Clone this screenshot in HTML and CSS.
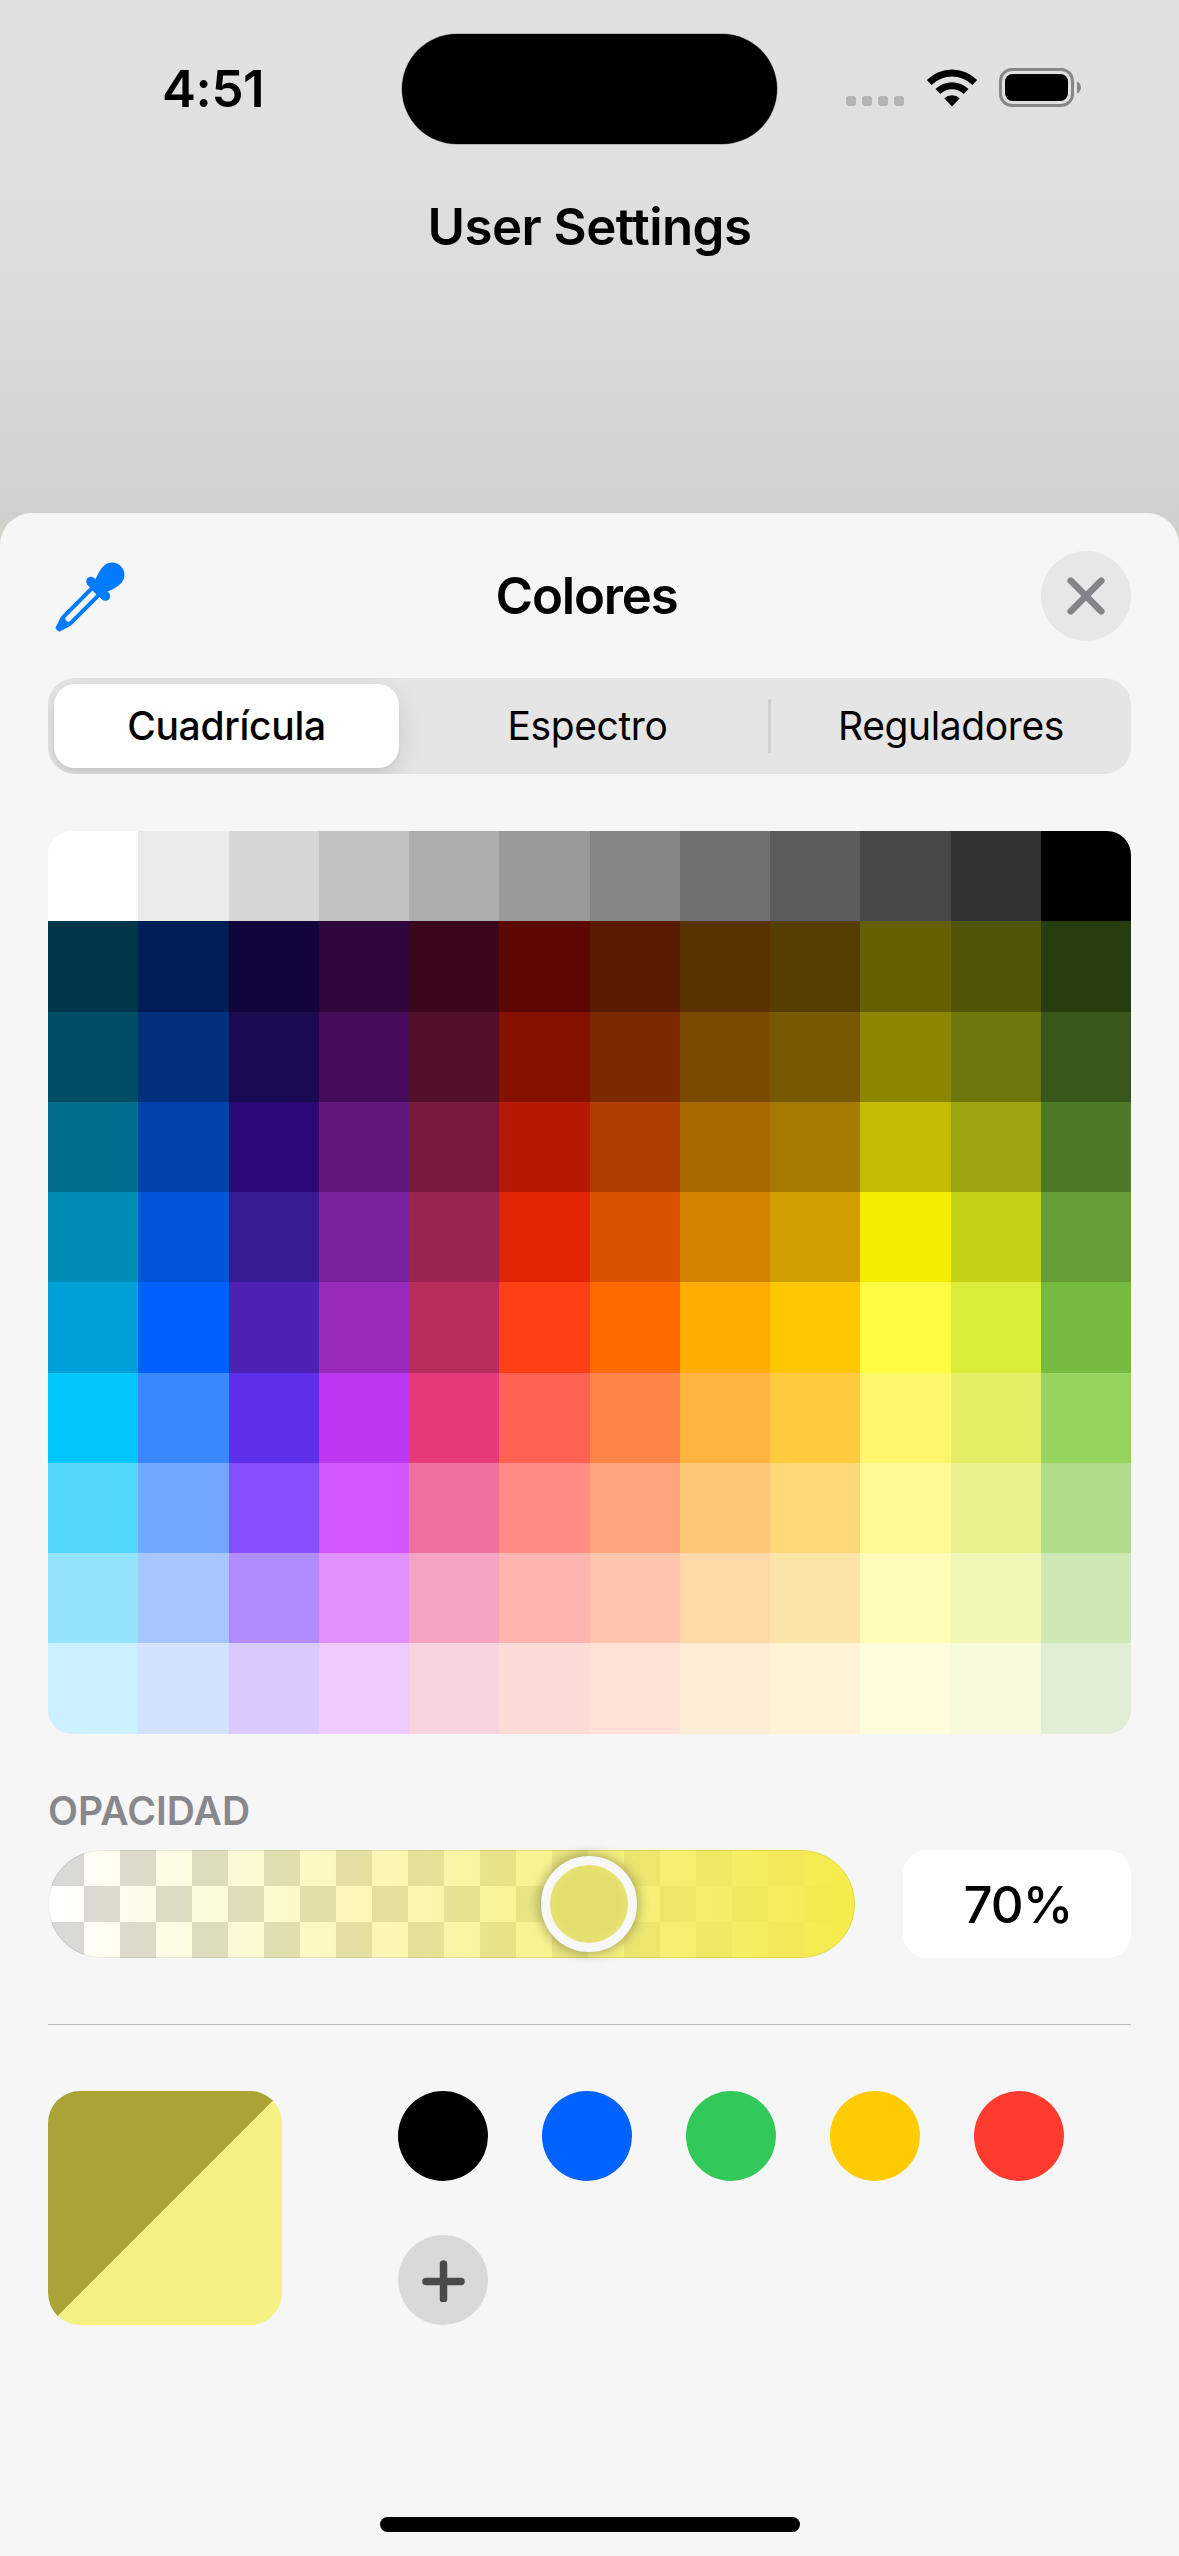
FILE: index.html
```html
<!DOCTYPE html>
<html lang="es">
<head>
<meta charset="utf-8">
<title>Colores</title>
<link rel="stylesheet" href="styles.css">
</head>
<body>
<div class="screen">
  <div class="status">
    <div class="time">4:51</div>
    <div class="island"></div>
    <div class="indicators">
      <div class="dots"><i></i><i></i><i></i><i></i></div>
      <svg class="wifi" width="52" height="38" viewBox="0 0 52 38">
        <path d="M.8 10.900A36 36 0 0 1 51.200 10.900L46.400 16A29 29 0 0 0 5.600 16Z"/>
        <path d="M9.500 20A23.500 23.500 0 0 1 42.500 20L37.700 25A16.500 16.500 0 0 0 14.300 25Z"/>
        <path d="M18.200 29.200A11.500 11.500 0 0 1 33.800 29.200L26 37.500Z"/>
      </svg>
      <svg class="battery" width="83" height="40" viewBox="0 0 83 40">
        <rect x="1.500" y="1.500" width="72" height="36" rx="11.500" fill="none" stroke="#878787" stroke-width="3"/>
        <rect x="6" y="6" width="63" height="27" rx="7.500"/>
        <path d="M78 13.500C83.300 15.500 83.300 23.500 78 25.500Z" fill="#878787"/>
      </svg>
    </div>
  </div>
  <h1 class="page-title">User Settings</h1>
  <main class="sheet">
    <header class="sheet-head">
      <svg class="dropper" width="72" height="72" viewBox="0 0 72 72">
        <g transform="translate(3 70) rotate(-45)" fill="#007aff">
          <path d="M0-1.500Q0-2.800 2-3.300C7-4.500 10-6.800 16-6.800H56V6.800H16C10 6.800 7 4.500 2 3.300Q0 2.800 0 1.500Z"/>
          <path d="M56-8C65-7.500 68-12.300 78-12.300A12.300 12.300 0 0 1 78 12.300C68 12.300 65 7.500 56 8Z"/>
          <rect x="53.500" y="-15" width="9.500" height="30" rx="4.750"/>
          <path d="M16-2.800H53V2.800H16A2.800 2.800 0 0 1 16-2.800Z" fill="#f6f6f6"/>
        </g>
      </svg>
      <h2 class="sheet-title">Colores</h2>
      <button class="close" aria-label="Cerrar">
        <svg width="38" height="38" viewBox="0 0 38 38"><path d="M3.700 3.700L34.300 34.300M34.300 3.700L3.700 34.300"/></svg>
      </button>
    </header>
    <nav class="segments">
      <div class="segment selected">Cuadrícula</div>
      <div class="segment middle">Espectro</div>
      <div class="segment last">Reguladores</div>
    </nav>
    <div class="grid" id="grid"></div>
    <div class="label">OPACIDAD</div>
    <div class="opacity">
      <div class="slider"><div class="knob"></div></div>
      <div class="value">70%</div>
    </div>
    <hr class="rule">
    <div class="saved">
      <div class="current"></div>
      <div class="swatches">
        <div class="dot black"></div>
        <div class="dot blue"></div>
        <div class="dot green"></div>
        <div class="dot yellow"></div>
        <div class="dot red"></div>
        <div class="dot add">
          <svg width="44" height="44" viewBox="0 0 44 44"><path d="M22.500 6V41M5 23.500H40"/></svg>
        </div>
      </div>
    </div>
    <div class="home"></div>
  </main>
</div>
<script src="grid.js"></script>
</body>
</html>
```
FILE: styles.css
```css
* { box-sizing: border-box; }
body {
  margin: 0;
  font-family: Inter, "Liberation Sans", sans-serif;
  color: #000;
}
h1, h2 { margin: 0; font-weight: 600; }
.screen {
  width: 1179px;
  height: 2556px;
  display: flex;
  flex-direction: column;
  overflow: hidden;
  background: linear-gradient(#e1e1e1 0, #e0e0e0 150px, #dcdcdc 290px, #d5d6d4 420px, #cfd1cd 520px, #cfd1cd 100%);
}
.status {
  height: 178px;
  padding: 33px 0 0 162px;
  display: flex;
  align-items: flex-start;
}
.time {
  width: 240px;
  height: 112px;
  line-height: 112px;
  font-size: 51px;
  font-weight: 600;
  letter-spacing: -0.400px;
}
.island {
  width: 375px;
  height: 110px;
  margin-top: 1px;
  border-radius: 55px;
  background: #000;
  box-shadow: 0 0 0 .5px rgba(0, 0, 0, .4);
}
.indicators {
  display: flex;
  align-items: flex-start;
  padding: 35px 0 0 69px;
}
.dots { display: flex; gap: 6px; padding-top: 28px; width: 80px; }
.dots i { width: 10px; height: 10px; border-radius: 3.500px; background: #b3b3b3; }
.wifi { display: block; margin-top: 1px; }
.battery { display: block; margin-left: 21px; }
.page-title {
  height: 335px;
  line-height: 98px;
  text-align: center;
  font-size: 51px;
  letter-spacing: -0.550px;
  font-feature-settings: "calt" 0, "liga" 0, "dlig" 0;
}
.sheet {
  flex: 1;
  padding: 38px 48px 0;
  display: flex;
  flex-direction: column;
  border-radius: 32px 32px 0 0;
  background: #f6f6f6;
}
.sheet-head {
  height: 90px;
  display: grid;
  grid-template-columns: 90px 1fr 90px;
  align-items: center;
}
.dropper { display: block; margin-left: 6px; }
.sheet-title {
  padding-right: 6px;
  text-align: center;
  font-size: 51px;
  letter-spacing: -1.200px;
  line-height: 90px;
}
.close {
  width: 90px;
  height: 90px;
  padding: 0;
  border: 0;
  border-radius: 50%;
  background: #e7e7e7;
  display: flex;
  align-items: center;
  justify-content: center;
}
.close path { stroke: #848488; stroke-width: 6.600; stroke-linecap: round; }
.segments {
  height: 96px;
  margin-top: 37px;
  padding: 6px;
  display: grid;
  grid-template-columns: 345px 1fr 354px;
  border-radius: 27px;
  background: #e5e5e5;
  overflow: hidden;
}
.segment {
  position: relative;
  display: flex;
  align-items: center;
  justify-content: center;
  padding-bottom: 1px;
  font-size: 39px;
  letter-spacing: -0.400px;
}
.segment.selected {
  font-weight: 500;
  letter-spacing: -0.300px;
  border-radius: 21px;
  background: #fff;
  box-shadow: 0 9px 24px rgba(0, 0, 0, .12), 0 3px 3px rgba(0, 0, 0, .04);
}
.segment.middle { padding-left: 5px; }
.segment.last { padding-left: 6px; }
.segment.last::before {
  content: "";
  position: absolute;
  left: -3px;
  top: 15px;
  width: 3px;
  height: 54px;
  border-radius: 2px;
  background: #cfcfd1;
}
.grid {
  height: 903px;
  margin-top: 57px;
  border-radius: 24px;
  overflow: hidden;
}
.grid svg { display: block; }
.label {
  height: 60px;
  margin-top: 47px;
  line-height: 60px;
  font-size: 39px;
  font-weight: 600;
  letter-spacing: .1px;
  color: #88888c;
}
.opacity { display: flex; justify-content: space-between; margin-top: 9px; }
.slider {
  position: relative;
  width: 807px;
  height: 108px;
  border-radius: 54px;
  background:
    linear-gradient(90deg, rgba(244, 235, 75, 0), #f4eb4b),
    conic-gradient(#fff 25%, #d9d9d9 0 50%, #fff 0 75%, #d9d9d9 0) 0 0 / 72px 72px;
  box-shadow: inset 0 0 0 1px rgba(0, 0, 0, .08);
}
.knob {
  position: absolute;
  left: 493px;
  top: 6px;
  width: 96px;
  height: 96px;
  border: 9px solid #f8f8f8;
  border-radius: 50%;
  background: #e3de6e;
  box-shadow: 0 0 14px rgba(0, 0, 0, .4), inset 0 0 9px #ece77a;
}
.value {
  width: 228px;
  height: 108px;
  border-radius: 24px;
  background: #fff;
  display: flex;
  align-items: center;
  justify-content: center;
  padding-left: 2px;
  font-size: 51px;
  font-weight: 500;
  letter-spacing: -1px;
}
.rule { width: 100%; height: 1px; margin: 66px 0 0; border: 0; background: #bcbcbe; }
.saved { display: flex; margin-top: 66px; }
.current {
  width: 234px;
  height: 234px;
  border-radius: 32px;
  background: linear-gradient(135deg, #aaa436 50%, #f6f184 50.200%);
}
.swatches {
  margin-left: 116px;
  display: grid;
  grid-template-columns: repeat(5, 90px);
  grid-auto-rows: 90px;
  gap: 54px;
}
.dot { border-radius: 50%; }
.black { background: #000; }
.blue { background: #0062ff; }
.green { background: #33c85a; }
.yellow { background: #ffcc02; }
.red { background: #ff3b30; }
.add { background: #d9d9d9; display: flex; align-items: center; justify-content: center; }
.add path { stroke: #4a4a4a; stroke-width: 7.500; stroke-linecap: round; }
.home {
  width: 420px;
  height: 15px;
  margin: 192px auto 0;
  border-radius: 8px;
  background: #000;
}
```
FILE: grid.js
```js
const rows = [
  "ffffff ebebeb d6d6d6 c2c2c2 adadad 999999 858585 707070 5c5c5c 474747 333333 000000",
  "00374a 011d57 11053b 2e063d 3c071b 5c0701 5a1c00 583300 563d00 666100 4f5504 263e0f",
  "004d65 012f7b 1a0a52 450d59 551029 831100 7b2900 7a4a00 785800 8d8602 6f760a 38571a",
  "016e8f 0042a9 2c0977 61187c 791a3d b51a00 ad3e00 a96800 a67b01 c4bc00 9ba50e 4e7a27",
  "008cb4 0056d6 371a94 7a219e 99244f e22400 da5100 d38301 d19d01 f5ec00 c3d117 669d34",
  "00a1d8 0061fe 4d22b2 982abc b92d5d ff4015 ff6a00 ffab01 fdc700 fefb41 d9ec37 76bb40",
  "01c7fc 3a87fe 5e30eb be38f3 e63b7a ff6250 ff8648 feb43f fecb3e fff76b e4ef65 96d35f",
  "52d6fc 74a7ff 864ffe d357fe ee719e ff8c82 ffa57d ffc777 ffd977 fff994 eaf28f b1dd8b",
  "93e3fd a7c6ff b18cfe e292fe f4a4c0 ffb5af ffc5ab ffd9a8 fee4a8 fffbb9 f2f7b7 cde8b5",
  "cbf0ff d3e2ff d9c9fe efcaff f9d3e0 ffdbd8 ffe2d6 ffecd4 fff2d5 fefcdd f7fadb dfeed4"
];
// Cells are 90.25px square, with edges snapped to whole pixels.
const edge = i => Math.round(i * 90.25);
const cells = rows.map((row, r) => row.split(" ").map((color, c) => {
  const x = edge(c), y = edge(r);
  return `<rect x="${x}" y="${y}" width="${edge(c + 1) - x}" height="${edge(r + 1) - y}" fill="#${color}"/>`;
}).join("")).join("");
document.getElementById("grid").innerHTML = `<svg width="1083" height="903">${cells}</svg>`;
```
